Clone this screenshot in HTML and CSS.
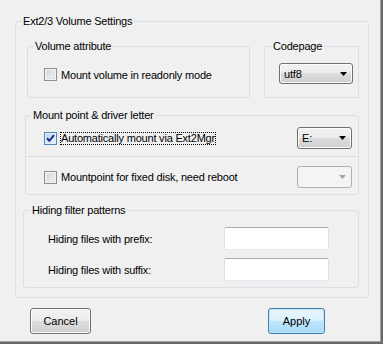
FILE: index.html
```html
<!DOCTYPE html>
<html lang="en">
<head>
    <meta charset="UTF-8">
    <meta name="viewport" content="width=device-width, initial-scale=1.0">
    <title>Ext2/3 Volume Settings</title>
    <link rel="stylesheet" href="styles.css">
</head>
<body>

<div class="dialog">
    <fieldset class="group group-main">
        <legend>Ext2/3 Volume Settings</legend>

        <div class="row-top">
            <fieldset class="group group-attr">
                <legend>Volume attribute</legend>
                <label class="check">
                    <span class="box"></span>
                    <span class="check-text">Mount volume in readonly mode</span>
                </label>
            </fieldset>

            <fieldset class="group group-codepage">
                <legend>Codepage</legend>
                <div class="combo combo-codepage">
                    <span class="combo-text">utf8</span>
                    <svg class="arrow" width="7" height="4" viewBox="0 0 7 4"><path d="M0 0H7L3.5 4Z"/></svg>
                </div>
            </fieldset>
        </div>

        <fieldset class="group group-mount">
            <legend>Mount point &amp; driver letter</legend>
            <div class="mount-row first">
                <label class="check">
                    <span class="box checked">
                        <svg width="11" height="11" viewBox="0 0 11 11"><path d="M2 5.2L4.4 7.8L9 2.2" fill="none" stroke="#1d2d86" stroke-width="2"/></svg>
                    </span>
                    <span class="check-text focus">Automatically mount via Ext2Mgr</span>
                </label>
                <div class="combo combo-drive">
                    <span class="combo-text">E:</span>
                    <svg class="arrow" width="7" height="4" viewBox="0 0 7 4"><path d="M0 0H7L3.5 4Z"/></svg>
                </div>
            </div>
            <div class="mount-row second">
                <label class="check">
                    <span class="box"></span>
                    <span class="check-text">Mountpoint for fixed disk, need reboot</span>
                </label>
                <div class="combo combo-drive disabled">
                    <span class="combo-text"></span>
                    <svg class="arrow" width="7" height="4" viewBox="0 0 7 4"><path d="M0 0H7L3.5 4Z"/></svg>
                </div>
            </div>
        </fieldset>

        <fieldset class="group group-hide">
            <legend>Hiding filter patterns</legend>
            <div class="field-row">
                <span class="field-label">Hiding files with prefix:</span>
                <span class="textbox"></span>
            </div>
            <div class="field-row">
                <span class="field-label">Hiding files with suffix:</span>
                <span class="textbox"></span>
            </div>
        </fieldset>
    </fieldset>

    <div class="buttons">
        <button class="btn btn-cancel">Cancel</button>
        <button class="btn btn-apply">Apply</button>
    </div>
</div>

</body>
</html>
```

FILE: styles.css
```css
html {
    background: #696969; /* window frame shadow */
}
body {
    margin: 0;
    width: 380px;
    height: 341px;
    background: #f0f0f0;
    border-right: 1px solid #a0a0a0;
    border-bottom: 1px solid #a0a0a0;
    font-family: "Liberation Sans", Arial, sans-serif;
    font-size: 11px;
    letter-spacing: -0.2px;
    color: #000;
}
.dialog {
    padding: 15px 0 0 15px;
}

/* group boxes */
.group {
    margin: 0;
    padding: 0;
    min-width: 0;
    box-sizing: border-box;
    border: 1px solid #d5dfe5;
    border-radius: 3px;
}
.group legend {
    padding: 0 2px;
    margin-left: 5px;
    line-height: 13px;
}
.group-main {
    width: 354px;
    height: 283px;
}
.row-top {
    display: flex;
    margin-top: 12px;
}
.group-attr {
    margin-left: 11px;
    width: 223px;
    height: 58px;
}
.group-codepage {
    margin-left: 14px;
    width: 95px;
    height: 58px;
}
.group-codepage legend {
    margin-left: 6px;
}
.group-mount {
    margin: 11px 0 0 9px;
    width: 334px;
    height: 86px;
}
.group-hide {
    margin: 9px 0 0 7px;
    width: 336px;
    height: 84px;
}
.group-hide legend {
    margin-left: 6px;
}

/* checkboxes */
.check {
    display: flex;
    align-items: center;
    height: 13px;
}
.group-attr .check {
    margin: 15px 0 0 16px;
}
.box {
    width: 13px;
    height: 13px;
    box-sizing: border-box;
    border: 1px solid #8e8f8f;
    background: linear-gradient(135deg, #cfd1d4, #f7f7f7);
    box-shadow: inset 0 0 0 1px #f4f4f4, inset 0 0 0 2px #e2e3e4;
    display: flex;
    align-items: center;
    justify-content: center;
    flex: none;
}
.box.checked {
    background: linear-gradient(135deg, #b6d4ee, #eef6fc);
    box-shadow: inset 0 0 0 1px #deedf9;
    border-color: #5586b8;
}
.check-text {
    margin-left: 4px;
    white-space: nowrap;
}
.check-text.focus {
    margin-left: 3px;
    border: 1px dotted #000;
    line-height: 11px;
    padding: 0;
}

/* mount rows */
.mount-row {
    display: flex;
    align-items: center;
    justify-content: space-between;
    padding: 0 6px 0 18px;
}
.mount-row.first {
    padding-top: 5px;
    padding-bottom: 7px;
    border-bottom: 1px solid #d5dfe5;
}
.mount-row.second {
    padding-top: 9px;
}

/* combo boxes */
.combo {
    display: flex;
    align-items: center;
    justify-content: space-between;
    box-sizing: border-box;
    border: 1px solid #707070;
    border-radius: 3px;
    background: linear-gradient(#f2f2f2 0%, #ebebeb 50%, #dddddd 50%, #cfcfcf 100%);
    box-shadow: inset 0 0 0 1px #fcfcfc;
    padding: 0 5px 0 4px;
}
.combo-codepage {
    width: 74px;
    height: 21px;
    margin: 10px 0 0 14px;
}
.combo-drive {
    width: 55px;
    height: 22px;
}
.combo.disabled {
    border-color: #adb2b5;
    background: #f4f4f4;
    box-shadow: none;
}
.arrow {
    fill: #000;
}
.combo.disabled .arrow {
    fill: #a3a3a3;
}

/* text fields */
.field-row {
    display: flex;
    align-items: center;
    padding: 0 0 0 24px;
    height: 23px;
    margin-top: 8px;
}
.field-row:first-of-type {
    margin-top: 10px;
}
.field-label {
    width: 176px;
}
.textbox {
    width: 105px;
    height: 23px;
    box-sizing: border-box;
    background: #fff;
    border: 1px solid #dbdfe6;
    border-top-color: #abadb3;
    border-bottom-color: #e3e9ef;
    border-radius: 2px;
}

/* buttons */
.buttons {
    display: flex;
    width: 354px;
    margin-top: 10px;
}
.btn {
    font: inherit;
    color: #000;
    height: 26px;
    padding: 0;
    border: 1px solid #707070;
    border-radius: 3px;
    background: linear-gradient(#f2f2f2 0%, #ebebeb 50%, #dddddd 50%, #cfcfcf 100%);
    box-shadow: inset 0 0 0 1px #fcfcfc;
}
.btn-cancel {
    width: 61px;
    margin-left: 15px;
}
.btn-apply {
    width: 57px;
    margin-left: auto;
    margin-right: 44px;
    border-color: #3c7fb1;
    background: linear-gradient(#eaf6fd 0%, #d9f0fc 50%, #bee6fd 50%, #a7d9f5 100%);
    box-shadow: inset 0 0 0 1px #c4e5f6;
}
```
